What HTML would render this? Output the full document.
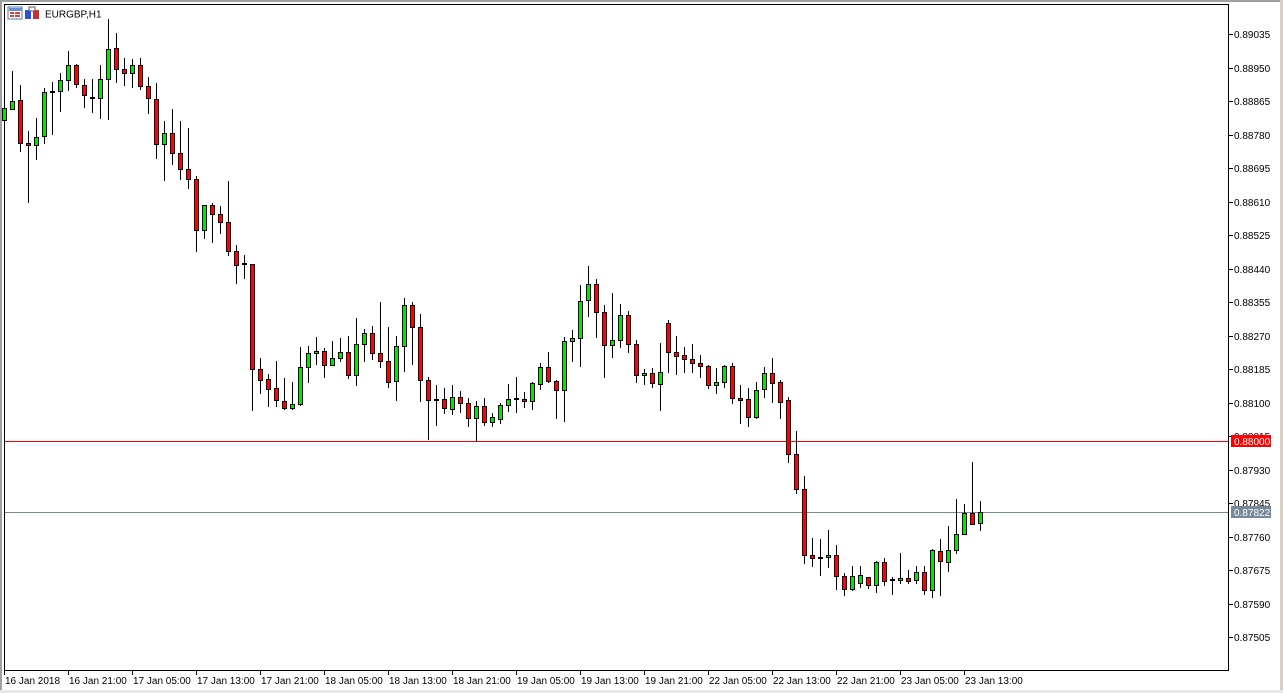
<!DOCTYPE html>
<html><head><meta charset="utf-8"><style>
html,body{margin:0;padding:0;background:#fff;width:1283px;height:693px;overflow:hidden}
svg{display:block}
text{font-family:"Liberation Sans",sans-serif;font-size:10px;fill:#000}
</style></head><body>
<svg id="s" width="1283" height="693" xmlns="http://www.w3.org/2000/svg" shape-rendering="crispEdges">
<rect x="0" y="0" width="1283" height="693" fill="#fff"/>
<rect x="0" y="0" width="1283" height="2" fill="#a0a0a0"/>
<rect x="0" y="0" width="2" height="693" fill="#a0a0a0"/>
<rect x="1280" y="0" width="3" height="693" fill="#d4d0c8"/>
<rect x="0" y="690" width="1283" height="3" fill="#e8e8e8"/>
<rect x="4" y="4" width="1225" height="1" fill="#000"/>
<rect x="4" y="4" width="1" height="667" fill="#000"/>
<rect x="1228" y="4" width="1" height="667" fill="#000"/>
<rect x="4" y="670" width="1225" height="1" fill="#000"/>
<!-- header icons -->
<rect x="8" y="7" width="14" height="12" fill="#fff" stroke="#5577aa"/>
<rect x="9" y="8" width="13" height="3" fill="#6a8fd0"/>
<rect x="10" y="12" width="4" height="2" fill="#e04040"/><rect x="15" y="12" width="5" height="2" fill="#e04040"/>
<rect x="10" y="15" width="4" height="2" fill="#e04040"/><rect x="15" y="15" width="5" height="2" fill="#e04040"/>
<rect x="25" y="10" width="6" height="9" fill="#2a4fd8"/>
<rect x="33" y="10" width="6" height="9" fill="#c83030"/>
<rect x="29" y="7" width="6" height="4" fill="#fff" stroke="#555"/>
<text x="45" y="17.5" style="font-size:10px">EURGBP,H1</text>
<g id="c"></g>
<g id="ax"></g>
</svg>
<script>
var D=[
['g',108,120,100,122],['g',101,109,71,109],['r',100,143,85,151],['r',143,145,131,202],['g',137,145,118,159],
['g',92,136,88,143],['d',92,92,82,134],['g',80,91,73,111],['g',65,80,51,90],['r',65,84,64,87],
['r',85,95,79,107],['d',98,98,79,112],['g',79,98,65,118],['g',49,79,19,119],['r',48,69,33,82],
['r',69,73,58,85],['g',65,73,59,87],['r',65,86,58,89],['r',86,98,77,113],['r',99,144,83,158],
['g',133,144,121,180],['r',133,153,109,164],['r',153,169,121,179],['r',169,179,128,188],['r',179,230,176,251],
['g',205,230,205,238],['r',205,214,203,242],['r',214,222,206,233],['r',222,251,181,255],['r',251,265,245,283],
['d',264,264,255,278],['r',264,369,264,410],['r',369,380,358,393],['r',379,389,374,406],['r',388,400,361,406],
['r',401,408,378,409],['g',404,408,382,409],['g',367,404,347,405],['g',353,367,346,382],['g',351,353,337,364],
['r',351,365,348,377],['g',358,365,341,365],['g',352,358,338,361],['r',352,375,336,378],['g',344,375,318,385],
['g',333,344,329,361],['r',333,353,326,359],['r',353,361,302,367],['r',361,382,327,387],['g',346,381,336,400],
['g',305,346,298,371],['r',305,327,302,364],['r',327,380,314,401],['r',380,400,377,439],['d',400,400,385,425],
['r',399,408,388,413],['g',397,409,385,414],['r',397,403,391,412],['r',403,418,398,426],['g',406,418,401,441],
['r',406,422,398,425],['g',417,422,413,426],['g',405,419,403,423],['g',399,405,384,411],['d',399,399,377,412],
['r',399,401,392,407],['g',383,401,382,409],['g',367,384,363,389],['r',367,381,352,382],['r',381,390,380,418],
['g',341,390,337,421],['g',338,341,330,361],['g',301,338,285,366],['g',284,300,266,316],['r',284,312,279,337],
['r',312,345,305,377],['g',340,345,293,357],['g',315,340,304,347],['r',315,344,311,352],['r',344,375,340,382],
['g',373,375,369,384],['r',373,383,368,387],['g',372,384,343,410],['r',323,352,320,372],['r',352,356,336,374],
['r',355,359,347,372],['r',359,363,344,372],['r',363,366,355,377],['r',366,385,365,388],['g',382,385,368,393],
['g',366,382,365,387],['r',366,398,363,403],['r',398,400,385,423],['r',399,417,388,426],['g',390,417,382,418],
['g',373,389,367,397],['r',373,383,358,402],['r',382,402,380,418],['r',400,454,397,462],['r',454,489,431,493],
['r',489,555,476,563],['r',555,558,538,566],['d',558,558,539,575],['g',555,557,530,567],['r',555,576,545,589],
['r',576,589,573,595],['g',576,589,566,590],['g',575,583,566,587],['r',577,585,577,588],['g',562,585,561,592],
['r',562,581,558,585],['d',580,580,577,594],['g',578,580,553,583],['r',578,581,570,583],['g',572,580,566,583],
['r',572,590,566,594],['g',550,590,549,597],['r',551,561,539,595],['g',550,562,526,571],['g',534,550,499,553],
['g',513,534,504,534],['r',513,524,462,524],['g',512,523,501,530]
];
var ns='http://www.w3.org/2000/svg',g=document.getElementById('c'),ax=document.getElementById('ax');
function R(p,x,y,w,h,f){var r=document.createElementNS(ns,'rect');r.setAttribute('x',x);r.setAttribute('y',y);r.setAttribute('width',w);r.setAttribute('height',h);r.setAttribute('fill',f);p.appendChild(r);}
function T(p,x,y,s,f){var t=document.createElementNS(ns,'text');t.setAttribute('x',x);t.setAttribute('y',y);if(f)t.setAttribute('style','fill:'+f);t.textContent=s;p.appendChild(t);}
// horizontal lines
R(g,5,441,1223,1,'#ff0000');R(g,5,512,1223,1,'#778899');
D.forEach(function(d,i){var wx=4+8*i,bx=2+8*i;
 R(g,wx,d[3],1,d[4]-d[3]+1,'#000');
 if(d[0]=='d'){R(g,bx,d[1]-1,5,2,'#000');}
 else{var h=Math.max(d[2]-d[1],2);R(g,bx,d[1],5,h+1,'#000');if(h>1)R(g,bx+1,d[1]+1,3,h-1,d[0]=='g'?'#00e800':'#ff0000');}
});
var P=['0.89035','0.88950','0.88865','0.88780','0.88695','0.88610','0.88525','0.88440','0.88355','0.88270','0.88185','0.88100','0.88015','0.87930','0.87845','0.87760','0.87675','0.87590','0.87505'];
P.forEach(function(p,k){var y=Math.round(34+k*33.5);R(ax,1229,y,4,1,'#000');T(ax,1234,y+4,p);});
R(ax,1231,435,40,12,'#ff0000');T(ax,1234,445,'0.88000','#fff');
R(ax,1231,506,40,12,'#778899');T(ax,1234,516,'0.87822','#fff');
var L=['16 Jan 2018','16 Jan 21:00','17 Jan 05:00','17 Jan 13:00','17 Jan 21:00','18 Jan 05:00','18 Jan 13:00','18 Jan 21:00','19 Jan 05:00','19 Jan 13:00','19 Jan 21:00','22 Jan 05:00','22 Jan 13:00','22 Jan 21:00','23 Jan 05:00','23 Jan 13:00'];
L.forEach(function(s,k){var x=4+64*k;R(ax,x,671,1,4,'#000');T(ax,x+1,684,s);});
</script>
</body></html>
